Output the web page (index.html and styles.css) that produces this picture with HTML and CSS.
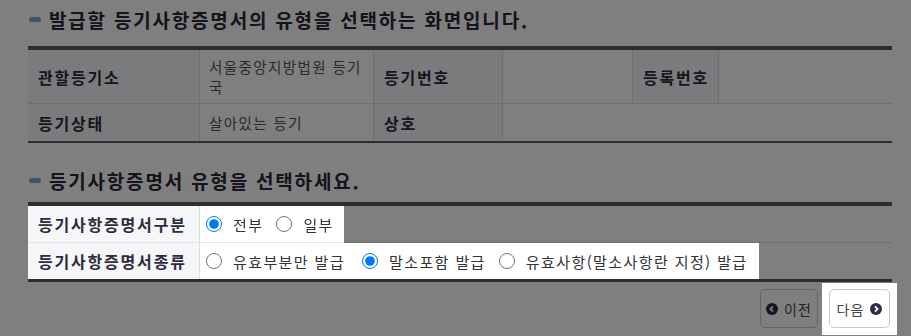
FILE: index.html
```html
<!DOCTYPE html>
<html lang="ko">
<head>
  <meta charset="UTF-8" />
  <title>등기사항증명서 발급</title>
  <link rel="stylesheet" href="styles.css">
</head>
<body>
  <div class="container">
    <h2 class="title"><span class="bullet"></span>발급할 등기사항증명서의 유형을 선택하는 화면입니다.</h2>
    <table class="info-table">
      <colgroup>
        <col style="width:172px" />
        <col style="width:174px" />
        <col style="width:129px" />
        <col style="width:130px" />
        <col style="width:86px" />
        <col />
      </colgroup>
      <tbody>
        <tr>
          <th>관할등기소</th>
          <td>서울중앙지방법원 등기국</td>
          <th>등기번호</th>
          <td></td>
          <th>등록번호</th>
          <td></td>
        </tr>
        <tr class="last">
          <th>등기상태</th>
          <td>살아있는 등기</td>
          <th>상호</th>
          <td colspan="3"></td>
        </tr>
      </tbody>
    </table>

    <h2 class="title second"><span class="bullet"></span>등기사항증명서 유형을 선택하세요.</h2>
    <table class="select-table">
      <colgroup>
        <col style="width:172px" />
        <col />
      </colgroup>
      <tbody>
        <tr>
          <th class="spot">등기사항증명서구분</th>
          <td>
            <div class="options spot">
              <label><input type="radio" name="scope" checked /> 전부</label>
              <label><input type="radio" name="scope" /> 일부</label>
            </div>
          </td>
        </tr>
        <tr class="last">
          <th class="spot">등기사항증명서종류</th>
          <td>
            <div class="options spot">
              <label class="wide"><input type="radio" name="kind" /> 유효부분만 발급</label>
              <label><input type="radio" name="kind" checked /> 말소포함 발급</label>
              <label><input type="radio" name="kind" /> 유효사항(말소사항란 지정) 발급</label>
            </div>
          </td>
        </tr>
      </tbody>
    </table>

    <div class="buttons">
      <button type="button" class="btn btn-prev">
        <svg width="12" height="12" viewBox="0 0 12 12"><circle cx="6" cy="6" r="6" fill="#2c2f45"/><path d="M7 3.4 L4.4 6 L7 8.6" fill="none" stroke="#fff" stroke-width="1.8"/></svg>
        이전
      </button>
      <div class="btn-spot spot">
        <button type="button" class="btn btn-next">
          다음
          <svg width="12" height="12" viewBox="0 0 12 12"><circle cx="6" cy="6" r="6" fill="#2c2f45"/><path d="M5 3.4 L7.6 6 L5 8.6" fill="none" stroke="#fff" stroke-width="1.8"/></svg>
        </button>
      </div>
    </div>
  </div>
  <div class="overlay"></div>
</body>
</html>
```

FILE: styles.css
```css
body {
  margin: 0;
  background-color: #fff;
  font-family: "Noto Sans CJK KR", "Noto Sans", sans-serif;
  color: #333;
}

.container {
  padding: 5px 19px 0 28px;
}

.title {
  display: flex;
  align-items: center;
  margin: 0 0 13px 0;
  height: 28px;
  font-size: 19px;
  font-weight: bold;
  letter-spacing: 1.8px;
  color: #2a2638;
  white-space: nowrap;
}

.title.second {
  margin-top: 23px;
  margin-bottom: 8px;
}

.bullet {
  display: inline-block;
  width: 12px;
  height: 5px;
  border-radius: 3px;
  background-color: #6aaee6;
  margin: 1px 8px 0 1px;
}

table {
  width: 864px;
  table-layout: fixed;
  border-collapse: separate;
  border-spacing: 0;
  border-top: 4px solid #5a5a64;
  border-bottom: 2px solid #5a5a64;
  font-size: 14.5px;
  letter-spacing: 1.4px;
}

th,
td {
  border-right: 1px solid #dcdcdc;
  border-bottom: 1px solid #dcdcdc;
  text-align: left;
  vertical-align: middle;
}

tr.last th,
tr.last td {
  border-bottom: none;
}

th {
  background-color: #f5f6f8;
  color: #2e2b3d;
  font-size: 16px;
  letter-spacing: 1.8px;
  white-space: nowrap;
}

td:last-child {
  border-right: none;
}

.info-table th {
  padding: 0 10px;
}

.info-table td {
  padding: 0 8px 0 9px;
  color: #555;
  line-height: 20px;
}

.info-table tr:first-child th,
.info-table tr:first-child td {
  height: 53px;
}

.info-table tr.last th,
.info-table tr.last td {
  height: 37px;
}

.select-table {
  border-bottom-width: 3px;
}

.select-table th {
  padding: 0 10px;
  height: 36px;
  border-bottom-color: #e4e4e8;
}

.select-table tr:first-child td {
  height: 36px;
}

.select-table td {
  padding: 0;
  background-color: #fff;
}

.options {
  display: inline-flex;
  align-items: center;
  height: 36px;
  padding: 0 10px 0 6px;
  gap: 13px;
  background-color: #fff;
  color: #333;
  font-size: 15px;
  vertical-align: top;
}

.select-table tr:first-child .options {
  box-shadow: 0 1px 0 #e4e4e8;
}

.select-table tr.last .options {
  padding-right: 11px;
}

.options label {
  display: flex;
  align-items: center;
  gap: 11px;
  white-space: nowrap;
}

.options label.wide {
  margin-right: 4px;
}

.options input {
  width: 16px;
  height: 16px;
  margin: 0;
}

.buttons {
  display: flex;
  justify-content: flex-end;
  align-items: flex-start;
  margin-top: 1px;
  margin-right: -5px;
  gap: 4px;
}

.btn {
  display: flex;
  align-items: center;
  justify-content: center;
  gap: 6px;
  height: 39px;
  padding: 0;
  border: 1px solid #c8c8c8;
  border-radius: 5px;
  background-color: #fff;
  color: #444;
  font-family: "Noto Sans CJK KR", sans-serif;
  font-size: 14px;
  letter-spacing: 1px;
  white-space: nowrap;
}

.btn-prev {
  width: 58px;
  margin-top: 6px;
}

.btn-next {
  width: 61px;
}

.btn-spot {
  padding: 6px 7px 7px 7px;
  background-color: #fff;
}

.spot {
  position: relative;
  z-index: 10;
}

.overlay {
  position: fixed;
  top: 0;
  left: 0;
  right: 0;
  bottom: 0;
  background-color: rgba(0, 0, 0, 0.5);
  z-index: 5;
}
```
